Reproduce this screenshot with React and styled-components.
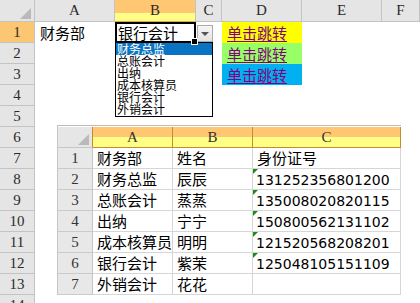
import React from 'react'
import styled, { createGlobalStyle, css } from 'styled-components'

const GlobalStyle = createGlobalStyle`
    html, body {
        margin: 0;
        padding: 0;
        background: #fff;
        overflow: hidden;
    }
    * { box-sizing: border-box; }
`

const CJK = `"Noto Sans CJK SC", sans-serif`
const SERIF = `"Liberation Serif", "Noto Sans CJK SC", serif`

const SHEET_COLS = '80px 81px 26px 80px 80px 1fr'

const orangeYellow = (split) => css`
    background: linear-gradient(#ffc771 0 ${split}%, #ffff86 ${split}% 100%);
`

const Sheet = styled.div`
    width: 420px;
    height: 303px;
    overflow: hidden;
    display: flex;
    flex-direction: column;
`

const HeaderRow = styled.div`
    display: grid;
    grid-template-columns: 35px ${SHEET_COLS};
    height: 22px;
    flex-shrink: 0;
`

const cornerTriangle = css`
    position: relative;
    &::after {
        content: '';
        position: absolute;
        right: 3px;
        bottom: 2px;
        border-left: 11px solid transparent;
        border-bottom: 11px solid #b9b9b9;
    }
`

const HeadCell = styled.div`
    display: flex;
    align-items: center;
    justify-content: center;
    background: #e5e5e5;
    border-right: 1px solid #c3c3c3;
    border-bottom: 1px solid #c3c3c3;
    font-family: ${SERIF};
    font-size: 15px;
    color: #2b2b2b;
    ${({ $selected }) => $selected && css`
        ${orangeYellow(62)}
        border-bottom-color: #e1a94e;
    `}
    ${({ $corner }) => $corner && cornerTriangle}
`

const Body = styled.div`
    display: flex;
    flex: 1;
`

const RowHeads = styled.div`
    display: flex;
    flex-direction: column;
    width: 35px;
    flex-shrink: 0;
`

const RowHead = styled.div`
    height: 21px;
    flex-shrink: 0;
    display: flex;
    align-items: center;
    justify-content: center;
    background: ${({ $selected }) => ($selected ? '#fcc672' : '#e5e5e5')};
    border-right: 1px solid #c3c3c3;
    border-bottom: 1px solid #c3c3c3;
    font-family: ${SERIF};
    font-size: 15px;
    color: #2b2b2b;
`

const CellArea = styled.div`
    flex: 1;
    display: flex;
    flex-direction: column;
`

const SheetRow = styled.div`
    display: grid;
    grid-template-columns: ${SHEET_COLS};
    height: 21px;
    flex-shrink: 0;
`

const Cell = styled.div`
    position: relative;
    padding-left: 5px;
    font-family: ${CJK};
    font-size: 15px;
    line-height: 21px;
    color: #000;
    white-space: nowrap;
    background: ${({ $bg }) => $bg || 'transparent'};
`

const ActiveCell = styled(Cell)`
    padding-left: 3px;
    box-shadow: inset 0 0 0 2px #000;
    z-index: 3;

    &::after {
        content: '';
        position: absolute;
        right: -2px;
        bottom: -2px;
        width: 5px;
        height: 5px;
        background: #000;
        border: 1px solid #fff;
    }
`

const LinkText = styled.span`
    color: #800080;
    text-decoration: underline;
    text-underline-offset: 2px;
    cursor: pointer;
`

const DropButton = styled.div`
    position: absolute;
    left: calc(100% + 1px);
    top: 3px;
    width: 16px;
    height: 17px;
    border: 1px solid #acacac;
    background: linear-gradient(#f6f6f6, #e3e3e3);
    display: flex;
    align-items: center;
    justify-content: center;

    &::before {
        content: '';
        border-left: 4px solid transparent;
        border-right: 4px solid transparent;
        border-top: 4px solid #555;
    }
`

const DropList = styled.ul`
    position: absolute;
    left: 0;
    top: calc(100% - 1px);
    width: 98px;
    margin: 0;
    padding: 0 0 1px;
    list-style: none;
    background: #fff;
    border: 1px solid #000;
    font-family: ${CJK};
    font-size: 12px;
`

const ListItem = styled.li`
    height: 12px;
    line-height: 12px;
    padding-left: 1px;
    color: ${({ $selected }) => ($selected ? '#fff' : '#000')};
    background: ${({ $selected }) => ($selected ? '#0a73c2' : 'transparent')};
`

const Embedded = styled.div`
    margin: 40px 0 0 22px;
    width: 344px;
    border-top: 1px solid #bdbdbd;
    border-left: 1px solid #c6c6c6;
    padding-top: 1px;
    background: #fff;
`

const EmbGrid = styled.div`
    display: grid;
    grid-template-columns: 35px 80px 80px 148px;
    grid-auto-rows: 21px;
`

const EmbCorner = styled.div`
    background: #e6e6e6;
    border-right: 1px solid #c48d35;
    border-bottom: 1px solid #c6c6c6;
    ${cornerTriangle}
`

const EmbColHead = styled.div`
    display: flex;
    align-items: center;
    justify-content: center;
    ${orangeYellow(50)}
    border-right: 1px solid #c48d35;
    border-bottom: 1px solid #c48d35;
    font-family: ${SERIF};
    font-size: 15px;
    color: #333;
`

const EmbRowHead = styled.div`
    display: flex;
    align-items: center;
    justify-content: center;
    background: #e8e8e8;
    border-right: 1px solid #c4c4c4;
    border-bottom: 1px solid #cbcbcb;
    font-family: ${SERIF};
    font-size: 15px;
    color: #333;
`

const EmbCell = styled.div`
    position: relative;
    padding-left: 4px;
    border-right: 1px solid #d6d6d6;
    border-bottom: 1px solid #d6d6d6;
    font-family: ${CJK};
    font-size: 15px;
    line-height: 20px;
    color: #000;
    white-space: nowrap;

    ${({ $num }) => $num && css`
        font-family: "DejaVu Sans", sans-serif;
        font-size: 14px;
        padding-left: 3px;
        padding-top: 1px;
    `}

    ${({ $flag }) => $flag && css`
        &::before {
            content: '';
            position: absolute;
            left: 0;
            top: 0;
            border-top: 5px solid #1d8a1d;
            border-right: 5px solid transparent;
        }
    `}
`

const roles = ['财务总监', '总账会计', '出纳', '成本核算员', '银行会计', '外销会计']

const staff = [
    ['财务部', '姓名', '身份证号'],
    ['财务总监', '辰辰', '131252356801200'],
    ['总账会计', '蒸蒸', '135008020820115'],
    ['出纳', '宁宁', '150800562131102'],
    ['成本核算员', '明明', '121520568208201'],
    ['银行会计', '紫茉', '125048105151109'],
    ['外销会计', '花花', ''],
]

const links = ['#ffff00', '#99ff66', '#00b0f0']

const App = () => (
    <>
        <GlobalStyle />
        <Sheet>
            <HeaderRow>
                <HeadCell $corner />
                <HeadCell>A</HeadCell>
                <HeadCell $selected>B</HeadCell>
                <HeadCell>C</HeadCell>
                <HeadCell>D</HeadCell>
                <HeadCell>E</HeadCell>
                <HeadCell>F</HeadCell>
            </HeaderRow>
            <Body>
                <RowHeads>
                    {Array.from({ length: 14 }, (_, i) => (
                        <RowHead key={i} $selected={i === 0}>{i + 1}</RowHead>
                    ))}
                </RowHeads>
                <CellArea>
                    {links.map((bg, i) => (
                        <SheetRow key={bg}>
                            <Cell>{i === 0 && '财务部'}</Cell>
                            {i === 0 ? (
                                <ActiveCell>
                                    银行会计
                                    <DropButton />
                                    <DropList>
                                        {roles.map((r, j) => (
                                            <ListItem key={r} $selected={j === 0}>{r}</ListItem>
                                        ))}
                                    </DropList>
                                </ActiveCell>
                            ) : (
                                <Cell />
                            )}
                            <Cell />
                            <Cell $bg={bg}>
                                <LinkText>单击跳转</LinkText>
                            </Cell>
                            <Cell />
                            <Cell />
                        </SheetRow>
                    ))}
                    <Embedded>
                        <EmbGrid>
                            <EmbCorner />
                            <EmbColHead>A</EmbColHead>
                            <EmbColHead>B</EmbColHead>
                            <EmbColHead>C</EmbColHead>
                            {staff.map((row, i) => (
                                <React.Fragment key={i}>
                                    <EmbRowHead>{i + 1}</EmbRowHead>
                                    <EmbCell>{row[0]}</EmbCell>
                                    <EmbCell>{row[1]}</EmbCell>
                                    <EmbCell $num={i > 0} $flag={i > 0 && row[2] !== ''}>
                                        {row[2]}
                                    </EmbCell>
                                </React.Fragment>
                            ))}
                        </EmbGrid>
                    </Embedded>
                </CellArea>
            </Body>
        </Sheet>
    </>
)

export default App
